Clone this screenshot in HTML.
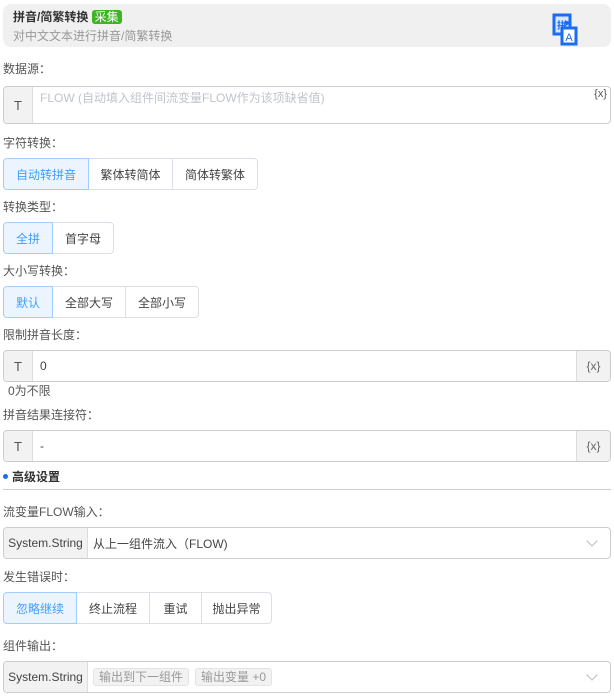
<!DOCTYPE html>
<html><head><meta charset="utf-8"><style>
*{box-sizing:border-box;margin:0;padding:0}
body{width:614px;height:696px;background:#fff;font-family:"Liberation Sans","Noto Sans CJK SC",sans-serif;font-size:12px;color:#555;position:relative;overflow:hidden}
.a{position:absolute}
.card{left:3px;top:4px;width:608px;height:43px;background:#f0f0f0;border-radius:8px}
.lbl{position:absolute;left:3px;color:#555;font-size:12px;line-height:14px}
.grp{position:absolute;left:3px;display:flex;height:32px}
.grp div{border:1px solid #dcdfe6;margin-left:-1px;display:flex;align-items:center;justify-content:center;color:#444;background:#fff}
.grp div:first-child{margin-left:0;border-radius:4px 0 0 4px;background:#ecf5ff;color:#409eff;border-color:#a0cfff;position:relative;z-index:1}
.grp div:last-child{border-radius:0 4px 4px 0}
.inp{position:absolute;left:3px;width:608px;height:32px;border:1px solid #ccc;border-radius:4px;display:flex;overflow:hidden}
.t{width:29px;background:#f2f2f2;border-right:1px solid #ddd;display:flex;align-items:center;justify-content:center;color:#555;font-size:13px}
.x{width:34px;background:#f2f2f2;border-left:1px solid #ddd;display:flex;align-items:center;justify-content:center;color:#666;font-size:12px}
.v{flex:1;display:flex;align-items:center;padding-left:7px;color:#444}
.ss{width:84px;background:#f2f2f2;border-right:1px solid #ddd;display:flex;align-items:center;justify-content:center;color:#444;font-size:12px}
.chev{position:absolute;right:14px;top:9px;width:8px;height:8px;border-right:1px solid #bbb;border-bottom:1px solid #bbb;transform:rotate(45deg)}
.tag{background:#f2f2f2;border:1px solid #e4e4e4;border-radius:3px;color:#999;padding:0 5px;height:18px;line-height:16px;margin-right:6px}
</style></head><body>
<div class="a card"></div>
<div class="a" style="left:13px;top:9px;font-size:12px;font-weight:bold;color:#333;line-height:16px">拼音/简繁转换 <span style="background:#3cb521;color:#fff;font-weight:normal;border-radius:3px;padding:0 3px;font-size:12px">采集</span></div>
<div class="a" style="left:13px;top:29px;color:#999;line-height:14px">对中文文本进行拼音/简繁转换</div>
<svg class="a" style="left:550px;top:12px" width="32" height="36" viewBox="0 0 32 36">
<rect x="4" y="3" width="16" height="19" fill="#dbe6fb" stroke="#1a6cf0" stroke-width="3"/>
<text x="12" y="17" font-size="10" font-weight="bold" fill="#1a6cf0" text-anchor="middle" font-family="Noto Sans CJK SC, sans-serif">拼</text>
<circle cx="17" cy="11" r="2" fill="#1a6cf0"/>
<rect x="12" y="16" width="14" height="16" fill="#fff" stroke="#1a6cf0" stroke-width="3"/>
<text x="19" y="29" font-size="11" fill="#1a6cf0" text-anchor="middle" font-family="Liberation Sans, sans-serif">A</text>
</svg>

<div class="lbl" style="top:62px">数据源：</div>
<div class="inp" style="top:86px;height:38px">
<div class="t">T</div>
<div class="v" style="align-items:flex-start;padding-top:2px;color:#c0c4cc">FLOW (自动填入组件间流变量FLOW作为该项缺省值)</div>
<div class="a" style="right:3px;top:1px;font-size:11px;color:#555">{x}</div>
</div>

<div class="lbl" style="top:136px">字符转换：</div>
<div class="grp" style="top:158px"><div style="width:86px">自动转拼音</div><div style="width:85px">繁体转简体</div><div style="width:86px">简体转繁体</div></div>
<div class="lbl" style="top:200px">转换类型：</div>
<div class="grp" style="top:222px"><div style="width:50px">全拼</div><div style="width:62px">首字母</div></div>
<div class="lbl" style="top:264px">大小写转换：</div>
<div class="grp" style="top:286px"><div style="width:50px">默认</div><div style="width:74px">全部大写</div><div style="width:74px">全部小写</div></div>

<div class="lbl" style="top:328px">限制拼音长度：</div>
<div class="inp" style="top:350px"><div class="t">T</div><div class="v">0</div><div class="x">{x}</div></div>
<div class="lbl" style="top:384px;left:8px">0为不限</div>
<div class="lbl" style="top:408px">拼音结果连接符：</div>
<div class="inp" style="top:430px"><div class="t">T</div><div class="v">-</div><div class="x">{x}</div></div>

<div class="a" style="left:3px;top:474px;width:5px;height:5px;border-radius:50%;background:#1a6cf0"></div>
<div class="a" style="left:12px;top:470px;font-weight:bold;color:#333;font-size:12px;line-height:14px">高级设置</div>
<div class="a" style="left:3px;top:489px;width:608px;height:1px;background:#ccc"></div>

<div class="lbl" style="top:505px">流变量FLOW输入：</div>
<div class="inp" style="top:527px"><div class="ss">System.String</div><div class="v" style="padding-left:5px">从上一组件流入（FLOW)</div><div class="chev"></div></div>
<div class="lbl" style="top:570px">发生错误时：</div>
<div class="grp" style="top:592px"><div style="width:74px">忽略继续</div><div style="width:74px">终止流程</div><div style="width:53px">重试</div><div style="width:71px">抛出异常</div></div>
<div class="lbl" style="top:639px">组件输出：</div>
<div class="inp" style="top:661px"><div class="ss">System.String</div><div class="v" style="padding-left:5px"><span class="tag">输出到下一组件</span><span class="tag">输出变量 +0</span></div><div class="chev"></div></div>
</body></html>
